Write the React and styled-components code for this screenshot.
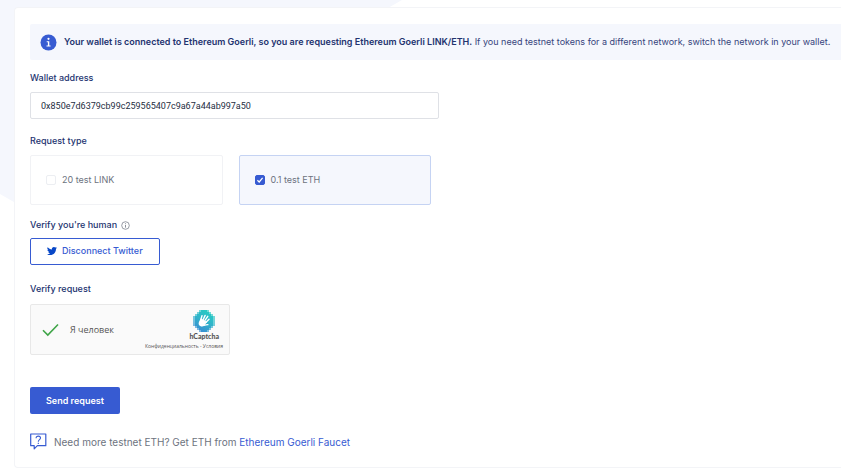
import React, { useState } from "react";
import styled, { createGlobalStyle } from "styled-components";

const GlobalStyle = createGlobalStyle`
  * { box-sizing: border-box; }
  body {
    margin: 0;
    background: #fff;
    color: #23336f;
    font-family: Inter, "Open Sans", sans-serif;
    font-size: 9px;
    line-height: 16px;
  }
  button, input { font: inherit; }
`;

const Page = styled.main`
  position: relative;
  isolation: isolate;
  padding: 7px 0 0 14px;
  min-height: 100vh;

  &::before {
    content: "";
    position: absolute;
    z-index: -1;
    top: 0;
    left: 0;
    width: 402px;
    height: 310px;
    background: #f5f7fd;
    clip-path: polygon(0 0, 100% 0, 50% 115px, 50% 100%, 0 194px);
  }
`;

const Card = styled.form`
  background: #fff;
  border: 1px solid #f3f4f7;
  border-right: 0;
  border-radius: 4px 0 0 4px;
  padding: 16px 0 17px 15px;
`;

const Alert = styled.div`
  display: flex;
  align-items: center;
  gap: 7px;
  min-height: 36px;
  padding: 4px 10px;
  background: #f5f7fd;
  border-radius: 2px 0 0 2px;
`;

const AlertText = styled.p`
  margin: 0;
  color: #35447c;

  strong { color: #23336f; font-weight: 600; }
`;

const Group = styled.div`
  margin-top: ${({ $gap }) => $gap}px;
`;

const Label = styled.label`
  display: flex;
  align-items: center;
  gap: 4px;
  margin-bottom: ${({ $space = 6 }) => $space}px;
  font-weight: 500;
`;

const AddressInput = styled.input`
  display: block;
  width: 100%;
  max-width: 409px;
  height: 27px;
  padding: 0 10px;
  border: 1px solid #dfe1e6;
  border-radius: 2px;
  background: #fff;
  color: #252e42;
  font-family: Roboto, sans-serif;
`;

const Options = styled.div`
  display: grid;
  grid-template-columns: 1fr 1fr;
  gap: 16px;
  max-width: 401px;
`;

const Option = styled.label`
  display: flex;
  align-items: center;
  gap: 6px;
  height: 50px;
  padding: 0 15px;
  border: 1px solid ${({ $selected }) => ($selected ? "#c5d3f3" : "#f1f2f5")};
  border-radius: 2px;
  background: ${({ $selected }) => ($selected ? "#f5f7fd" : "#fff")};
  color: #6d7380;
`;

const Checkbox = styled.input`
  appearance: none;
  width: 10px;
  height: 10px;
  margin: 0;
  border: 1px solid #eceef2;
  border-radius: 2px;
  background: #fff;

  &:checked {
    border-color: #375bd2;
    background: #375bd2 url("data:image/svg+xml,%3Csvg xmlns='http://www.w3.org/2000/svg' viewBox='0 0 8 8'%3E%3Cpath d='M1.4 4.3 3.2 6 6.6 1.8' fill='none' stroke='white' stroke-width='1.2'/%3E%3C/svg%3E") center / 8px no-repeat;
  }
`;

const TwitterButton = styled.button`
  display: flex;
  align-items: center;
  justify-content: center;
  gap: 5px;
  height: 27px;
  padding: 0 16px 2px;
  border: 1px solid #375bd2;
  border-radius: 2px;
  background: #fff;
  color: #375bd2;
  font-weight: 500;
`;

const Captcha = styled.div`
  display: flex;
  align-items: center;
  width: 200px;
  height: 51px;
  padding: 0 6px 0 11px;
  border: 1px solid #e8e8e8;
  border-radius: 2px;
  background: #fafafa;
  color: #555;
`;

const CaptchaStatus = styled.span`
  display: flex;
  align-items: center;
  gap: 11px;
  font-family: "Open Sans", sans-serif;
`;

const CaptchaBrand = styled.div`
  display: flex;
  flex-direction: column;
  align-items: center;
  margin-left: auto;
  color: #555;
`;

const BrandBlock = styled.div`
  display: flex;
  flex-direction: column;
  align-items: center;
  align-self: flex-end;
  padding-right: 4px;
  font-family: Lato, sans-serif;
  font-size: 7px;
  font-weight: 900;
  line-height: 9px;
`;

const CaptchaLinks = styled.div`
  margin-top: 1px;
  font-family: "Open Sans", sans-serif;
  font-size: 5px;
  line-height: 8px;
  white-space: nowrap;

  a { color: inherit; text-decoration: none; }
`;

const SendButton = styled.button`
  display: block;
  height: 27px;
  margin-top: 32px;
  padding: 0 16px;
  border: 0;
  border-radius: 2px;
  background: #375bd2;
  color: #fff;
  font-weight: 600;
`;

const Help = styled.p`
  display: flex;
  align-items: center;
  gap: 7px;
  margin: 19px 0 0;
  color: #6d7380;
  font-size: 10px;

  a { color: #375bd2; text-decoration: none; }
`;

const Icon = styled.svg`
  flex: none;
  display: block;
`;

function AlertIcon() {
  return (
    <Icon width="17" height="17" viewBox="0 0 17 17" aria-hidden="true">
      <circle cx="8.5" cy="8.5" r="8" fill="#375bd2" />
      <circle cx="8.5" cy="4.8" r="1.1" fill="#fff" />
      <path d="M6.7 7.2h2.6v4.4h1.3v1H6.5v-1h1.4V8.2H6.7z" fill="#fff" />
    </Icon>
  );
}

function HintIcon() {
  return (
    <Icon width="9" height="9" viewBox="0 0 9 9" aria-hidden="true">
      <circle cx="4.5" cy="4.5" r="3.8" fill="none" stroke="#6d7380" strokeWidth="0.7" />
      <path d="M4.5 4v2.6M4.5 2.3v.9" stroke="#6d7380" strokeWidth="0.8" />
    </Icon>
  );
}

function TwitterIcon() {
  return (
    <Icon width="10" height="10" viewBox="0 0 24 24" aria-hidden="true">
      <path
        fill="#0847c7"
        d="M23.95 4.57a10 10 0 0 1-2.82.77 4.96 4.96 0 0 0 2.16-2.72c-.95.55-2 .95-3.13 1.18a4.92 4.92 0 0 0-8.38 4.48C7.69 8.09 4.07 6.13 1.64 3.16a4.92 4.92 0 0 0 1.52 6.57 4.9 4.9 0 0 1-2.23-.61v.06a4.92 4.92 0 0 0 3.95 4.83 5 5 0 0 1-2.21.08 4.94 4.94 0 0 0 4.6 3.42A9.87 9.87 0 0 1 0 19.54a14 14 0 0 0 7.55 2.21c9.05 0 14-7.5 14-13.98 0-.21 0-.42-.02-.63a9.94 9.94 0 0 0 2.42-2.57z"
      />
    </Icon>
  );
}

function TickIcon() {
  return (
    <Icon width="17" height="14" viewBox="0 0 17 14" aria-hidden="true">
      <path d="M1 7.2 5.8 12 16 1.5" fill="none" stroke="#3fa548" strokeWidth="1.6" />
    </Icon>
  );
}

const pixelRows = [
  [3, 5], [2, 7], [1, 9], [0, 11], [0, 11], [0, 11], [0, 11], [0, 11], [1, 9], [2, 7], [3, 5],
];

function CaptchaLogo() {
  return (
    <Icon width="22" height="22" viewBox="0 0 22 22" aria-hidden="true">
      <defs>
        <linearGradient id="pixels" gradientUnits="userSpaceOnUse" x1="17" y1="1" x2="6" y2="21">
          <stop offset="0" stopColor="#12c9bd" />
          <stop offset="0.5" stopColor="#1fadc6" />
          <stop offset="1" stopColor="#2684cf" />
        </linearGradient>
      </defs>
      {pixelRows.map(([start, count], row) => (
        <React.Fragment key={row}>
          <rect x={start * 2} y={row * 2} width={count * 2} height="2" fill="url(#pixels)" opacity="0.6" />
          <rect x={start * 2 + 2} y={row * 2} width={count * 2 - 4} height="2" fill="url(#pixels)" opacity="0.8" />
        </React.Fragment>
      ))}
      <g transform="rotate(32 11 11)">
        <path
          d="M7.6 11.5 6.5 7.6M9.5 10 9 5.6M11.5 10l.2-5M13.4 11l.9-4.2M13 14.8c1.5-.5 1.8-2.2 3.2-2.8"
          fill="none"
          stroke="#fff"
          strokeLinecap="round"
          strokeWidth="1.4"
        />
        <path d="M6.9 10.2h7.2l-.3 4.2c-.4 1.9-1.6 2.9-3.3 2.9-2.2 0-3.2-1.4-3.4-3.6z" fill="#fff" />
      </g>
    </Icon>
  );
}

function HelpIcon() {
  return (
    <Icon width="17" height="17" viewBox="0 0 17 17" aria-hidden="true">
      <path d="M.7 1h15.1v11.7H7.4L4.2 15.9v-3.2H.7z" fill="none" stroke="#375bd2" strokeWidth="1.2" strokeLinejoin="round" />
      <path d="M6.1 5.2c0-1.3.9-2.1 2.2-2.1s2.2.8 2.2 2c0 1.6-2.2 1.6-2.2 3.6M8.3 9.7v1.2" fill="none" stroke="#375bd2" strokeWidth="1.1" />
    </Icon>
  );
}

export default function App() {
  const [address, setAddress] = useState("0x850e7d6379cb99c259565407c9a67a44ab997a50");
  const [link, setLink] = useState(false);
  const [eth, setEth] = useState(true);

  return (
    <>
      <GlobalStyle />
      <Page>
        <Card onSubmit={(e) => e.preventDefault()}>
          <Alert>
            <AlertIcon />
            <AlertText>
              <strong>
                Your wallet is connected to Ethereum Goerli, so you are requesting Ethereum Goerli LINK/ETH.
              </strong>{" "}
              If you need testnet tokens for a different network, switch the network in your wallet.
            </AlertText>
          </Alert>

          <Group $gap={10}>
            <Label htmlFor="address">Wallet address</Label>
            <AddressInput id="address" value={address} onChange={(e) => setAddress(e.target.value)} />
          </Group>

          <Group $gap={14} role="group" aria-labelledby="request-type">
            <Label as="div" id="request-type">Request type</Label>
            <Options>
              <Option $selected={link}>
                <Checkbox type="checkbox" checked={link} onChange={(e) => setLink(e.target.checked)} />
                20 test LINK
              </Option>
              <Option $selected={eth}>
                <Checkbox type="checkbox" checked={eth} onChange={(e) => setEth(e.target.checked)} />
                0.1 test ETH
              </Option>
            </Options>
          </Group>

          <Group $gap={12}>
            <Label as="div" $space={5}>
              Verify you're human <HintIcon />
            </Label>
            <TwitterButton type="button">
              <TwitterIcon />
              Disconnect Twitter
            </TwitterButton>
          </Group>

          <Group $gap={16}>
            <Label as="div" $space={7}>Verify request</Label>
            <Captcha>
              <CaptchaStatus>
                <TickIcon />Я человек
              </CaptchaStatus>
              <CaptchaBrand>
                <BrandBlock>
                  <CaptchaLogo />
                  hCaptcha
                </BrandBlock>
                <CaptchaLinks>
                  <a href="#privacy">Конфиденциальность</a> - <a href="#terms">Условия</a>
                </CaptchaLinks>
              </CaptchaBrand>
            </Captcha>
          </Group>

          <SendButton type="submit">Send request</SendButton>

          <Help>
            <HelpIcon />
            <span>
              Need more testnet ETH? Get ETH from <a href="#faucet">Ethereum Goerli Faucet</a>
            </span>
          </Help>
        </Card>
      </Page>
    </>
  );
}
